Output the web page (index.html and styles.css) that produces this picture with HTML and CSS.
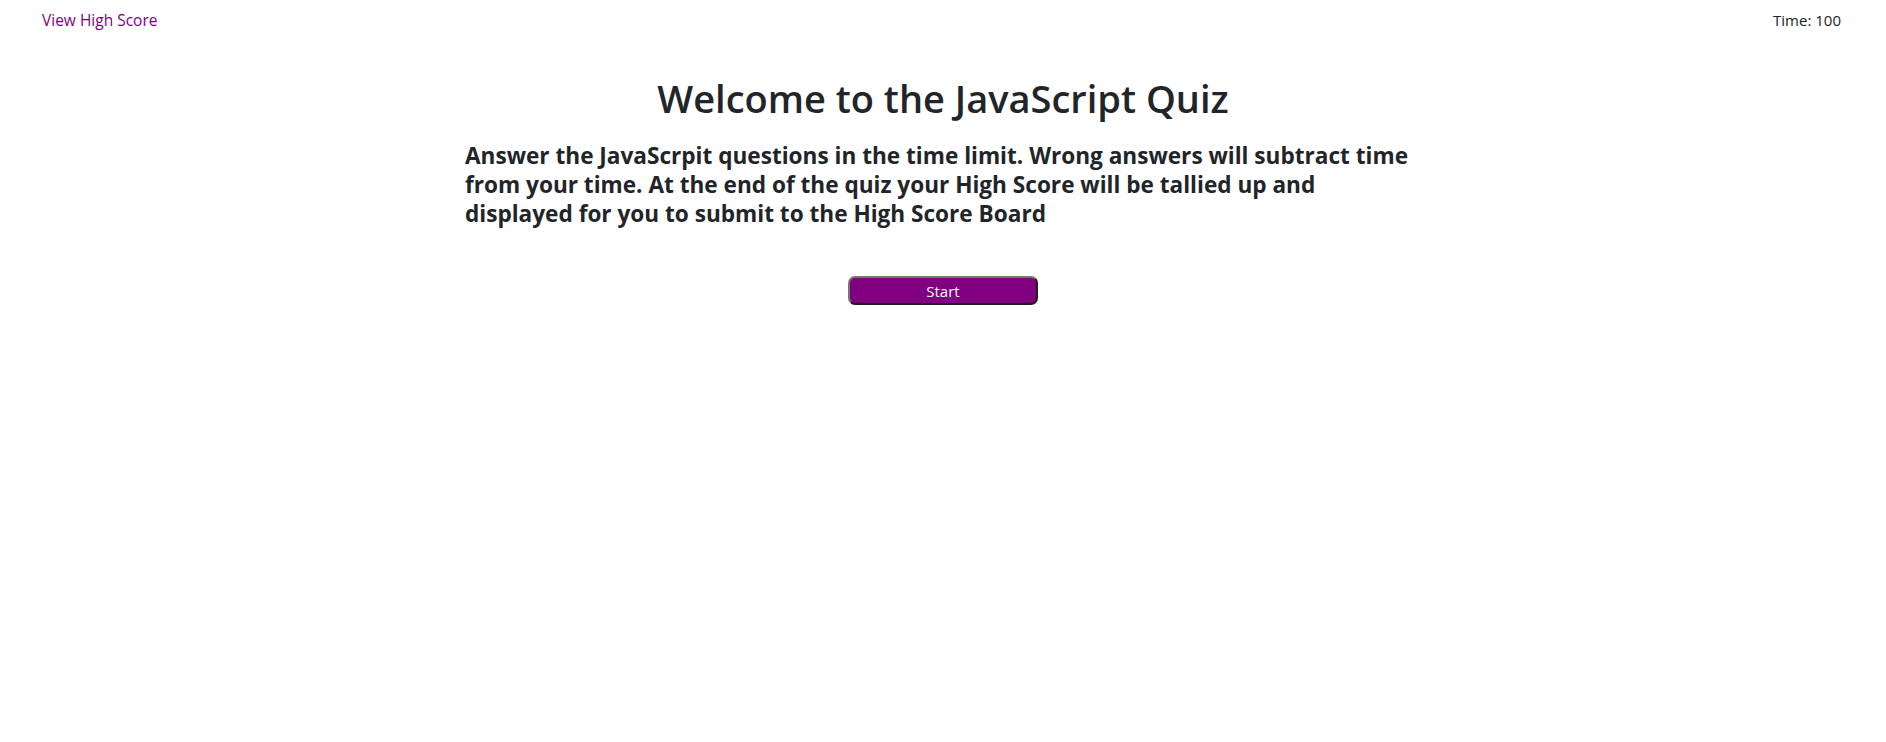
FILE: index.html
```html
<!DOCTYPE html>
<html lang="en">
<head>
<meta charset="utf-8">
<title>JavaScript Quiz</title>
<link rel="stylesheet" href="styles.css">
</head>
<body>
<header class="topbar">
  <a class="highscore-link" href="#">View High Score</a>
  <span class="timer">Time: 100</span>
</header>
<main class="intro">
  <h1 class="intro-title">Welcome to the JavaScript Quiz</h1>
  <h4 class="intro-text">Answer the JavaScrpit questions in the time limit. Wrong answers will subtract time from your time. At the end of the quiz your High Score will be tallied up and displayed for you to submit to the High Score Board</h4>
  <button class="start-btn" type="button">Start</button>
</main>
</body>
</html>
```
FILE: styles.css
```css
* { box-sizing: border-box; }
body {
  margin: 0;
  font-family: "Open Sans", "Noto Sans", sans-serif;
  color: #212529;
  background: #fff;
  font-size: 16px;
  line-height: 1.5;
}
.topbar {
  display: flex;
  justify-content: space-between;
  align-items: center;
  padding: 9px 45px 8px 42px;
}
.highscore-link {
  color: #800080;
  text-decoration: none;
  font-size: 15.5px;
}
.timer {
  font-size: 15px;
}
.intro {
  display: flex;
  flex-direction: column;
  align-items: center;
}
.intro-title {
  margin: 34px 0 19px;
  font-size: 38px;
  font-weight: 600;
  line-height: 48px;
}
.intro-text {
  width: 956px;
  margin: 0;
  font-size: 22.6px;
  font-weight: 700;
  line-height: 29px;
}
.start-btn {
  margin-top: 48px;
  width: 190px;
  height: 29px;
  background: #800080;
  color: #fff;
  font-family: inherit;
  font-size: 15px;
  border: 2px solid;
  border-color: #767676 #1e1e1e #1e1e1e #767676;
  border-radius: 7px;
  padding: 0;
}
```
